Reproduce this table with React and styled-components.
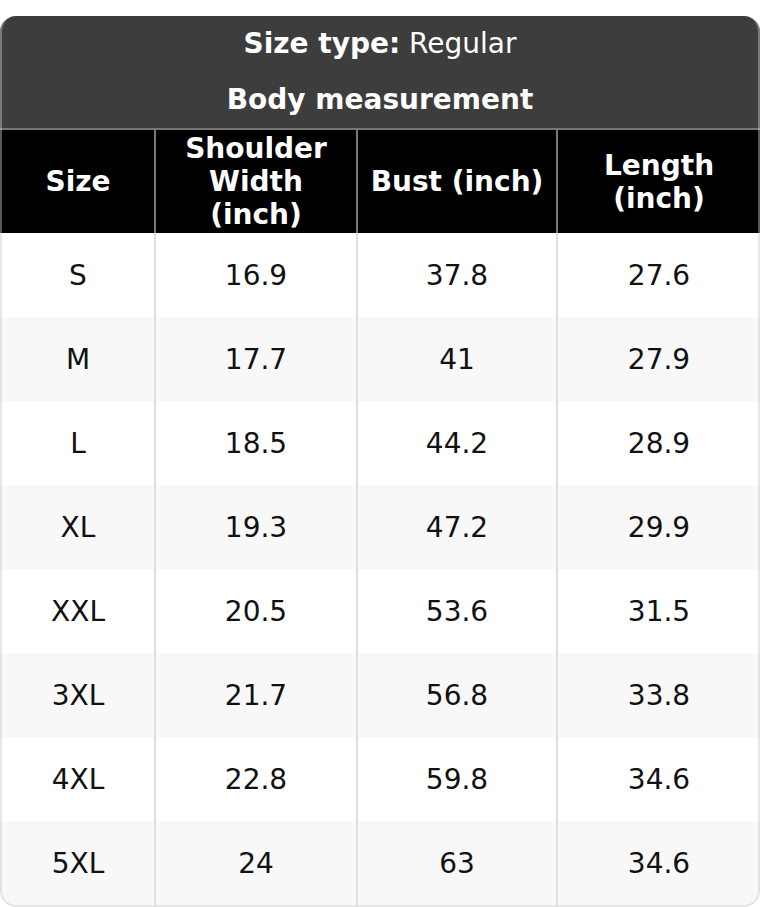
import styled, { createGlobalStyle } from 'styled-components';

const GlobalStyle = createGlobalStyle`
  body {
    margin: 0;
    background: #fff;
    font-family: "DejaVu Sans", "Liberation Sans", sans-serif;
  }
`;

const Card = styled.div`
  position: relative;
  width: 760px;
  margin-top: 16px;
  padding-bottom: 2px;
  border-radius: 16px;
  overflow: hidden;

  &::after {
    content: '';
    position: absolute;
    inset: 0;
    border: 2px solid rgba(200, 200, 200, 0.45);
    border-top: none;
    border-radius: 16px;
    pointer-events: none;
  }
`;

const Table = styled.table`
  width: 100%;
  table-layout: fixed;
  border-collapse: separate;
  border-spacing: 0;
  font-size: 28px;
  text-align: center;
`;

const TitleCell = styled.th`
  box-sizing: border-box;
  height: ${(p) => p.$h}px;
  padding: 0 0 2px;
  background: #3d3d3d;
  color: #fff;
  font-weight: ${(p) => (p.$bold ? 700 : 400)};
  line-height: 33px;
  border-bottom: ${(p) => (p.$last ? '2px solid #777' : 'none')};
`;

const HeadCell = styled.th`
  height: 103px;
  padding: 0 6px 0 ${(p) => (p.$first ? 8 : 6)}px;
  background: #000;
  color: #fff;
  font-weight: 700;
  line-height: 33px;
  vertical-align: middle;
  border-left: ${(p) => (p.$first ? 'none' : '2px solid #777')};
`;

const Row = styled.tr`
  background: ${(p) => (p.$striped ? '#f8f8f8' : '#fff')};
`;

const Cell = styled.td`
  height: 84px;
  padding: 0 0 0 ${(p) => (p.$first ? 2 : 0)}px;
  color: #111;
  vertical-align: middle;
  border-left: ${(p) => (p.$first ? 'none' : '2px solid #dedede')};
`;

const sizes = [
  ['S', '16.9', '37.8', '27.6'],
  ['M', '17.7', '41', '27.9'],
  ['L', '18.5', '44.2', '28.9'],
  ['XL', '19.3', '47.2', '29.9'],
  ['XXL', '20.5', '53.6', '31.5'],
  ['3XL', '21.7', '56.8', '33.8'],
  ['4XL', '22.8', '59.8', '34.6'],
  ['5XL', '24', '63', '34.6'],
];

const App = () => {
  return (
    <>
      <GlobalStyle />
      <Card>
        <Table>
          <colgroup>
            <col style={{ width: 154 }} />
            <col style={{ width: 202 }} />
            <col style={{ width: 200 }} />
            <col style={{ width: 204 }} />
          </colgroup>
          <thead>
            <tr>
              <TitleCell colSpan={4} $h={56}>
                <b>Size type:</b> Regular
              </TitleCell>
            </tr>
            <tr>
              <TitleCell colSpan={4} $h={58} $bold $last>
                Body measurement
              </TitleCell>
            </tr>
            <tr>
              <HeadCell $first>Size</HeadCell>
              <HeadCell>Shoulder Width (inch)</HeadCell>
              <HeadCell>Bust (inch)</HeadCell>
              <HeadCell>Length (inch)</HeadCell>
            </tr>
          </thead>
          <tbody>
            {sizes.map((r, i) => (
              <Row key={r[0]} $striped={i % 2 === 1}>
                {r.map((v, j) => (
                  <Cell key={j} $first={j === 0}>{v}</Cell>
                ))}
              </Row>
            ))}
          </tbody>
        </Table>
      </Card>
    </>
  );
};

export default App;
